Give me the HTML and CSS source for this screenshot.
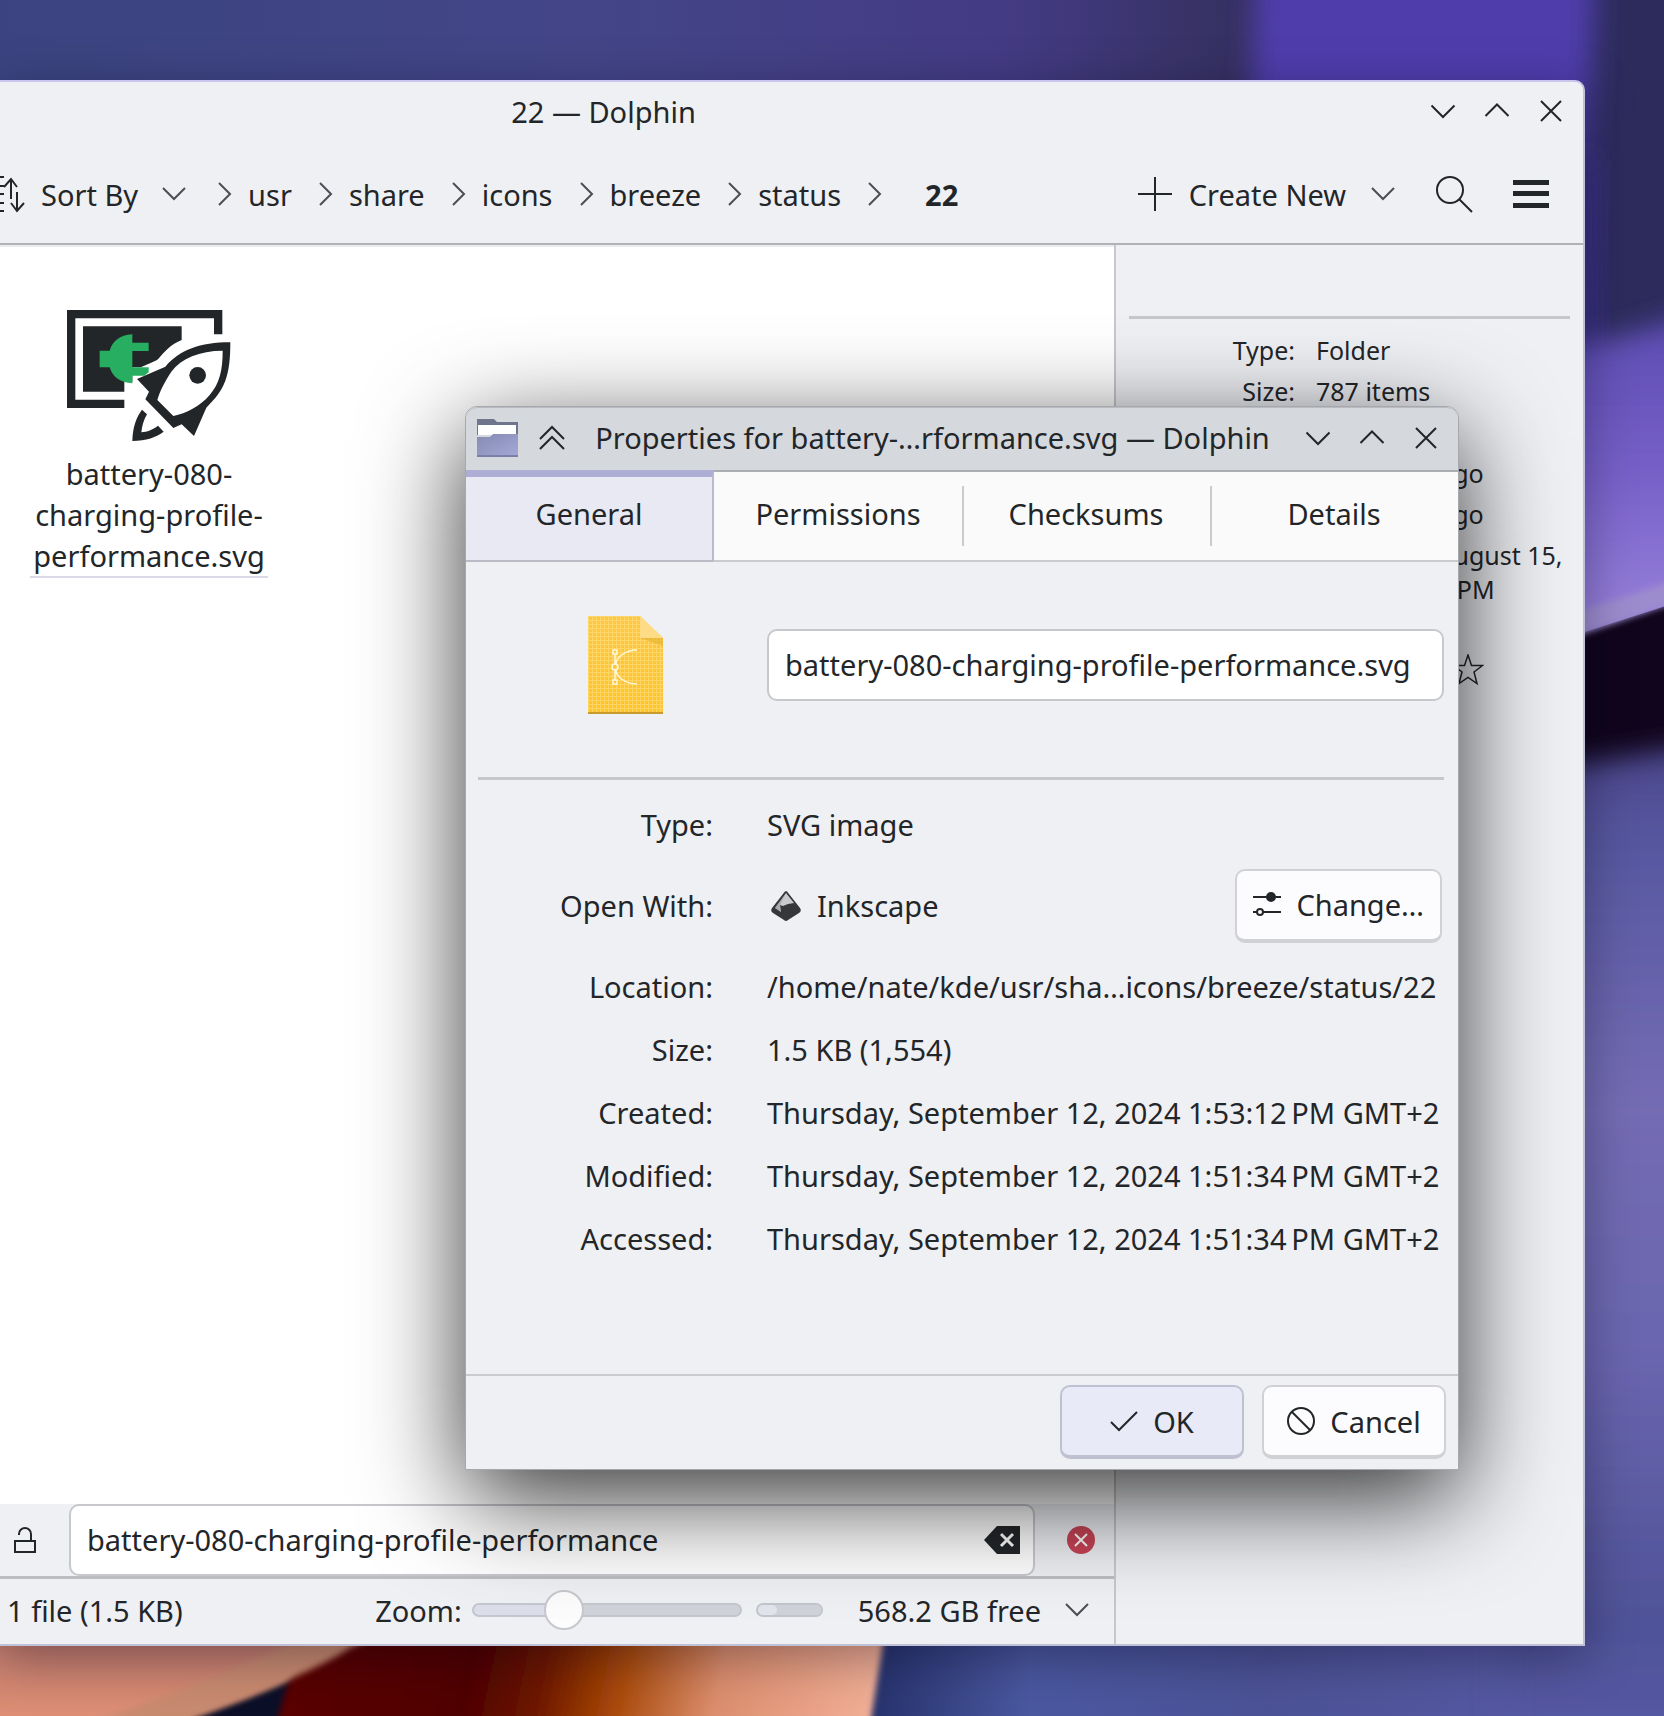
FILE: index.html
```html
<!DOCTYPE html>
<html lang="en">
<head>
<meta charset="utf-8">
<title>22 — Dolphin</title>
<link rel="stylesheet" href="styles.css">
</head>
<body class="desktop">
<svg class="wallpaper" viewBox="0 0 1664 1716" preserveAspectRatio="none" aria-hidden="true">
  <defs>
    <linearGradient id="sky" x1="0" x2="1" y1="0" y2="0">
      <stop offset="0" stop-color="#3b4480"/><stop offset=".35" stop-color="#434588"/><stop offset=".6" stop-color="#443b85"/><stop offset=".75" stop-color="#35305f"/><stop offset="1" stop-color="#2c2b5c"/>
    </linearGradient>
    <linearGradient id="petal" x1="0" x2="0" y1="0" y2="1">
      <stop offset="0" stop-color="#5a4ab0"/><stop offset=".5" stop-color="#7660c8"/><stop offset="1" stop-color="#9a84dc"/>
    </linearGradient>
    <linearGradient id="sea" x1="0" x2="0" y1="0" y2="1">
      <stop offset="0" stop-color="#4a4488"/><stop offset=".1" stop-color="#5657a0"/><stop offset=".35" stop-color="#746cb4"/><stop offset=".6" stop-color="#6965ae"/><stop offset=".85" stop-color="#4f5298"/><stop offset="1" stop-color="#585ca8"/>
    </linearGradient>
    <linearGradient id="ember" x1="300" x2="870" y1="1640" y2="1760" gradientUnits="userSpaceOnUse">
      <stop offset="0" stop-color="#5a0000"/><stop offset=".3" stop-color="#500000"/><stop offset=".42" stop-color="#6e1800"/><stop offset=".55" stop-color="#a84808"/><stop offset=".72" stop-color="#dc8e6e"/><stop offset="1" stop-color="#f2b098"/>
    </linearGradient>
    <linearGradient id="coral" x1="0" x2="0" y1="0" y2="1">
      <stop offset="0" stop-color="#b0706a"/><stop offset=".7" stop-color="#dd8e74"/>
    </linearGradient>
    <linearGradient id="bay" x1="0" x2="1" y1="0" y2="0">
      <stop offset="0" stop-color="#26326c"/><stop offset=".2" stop-color="#4a58a0"/><stop offset=".5" stop-color="#4c5296"/><stop offset="1" stop-color="#5a5ca8"/>
    </linearGradient>
    <filter id="soft" x="-20%" y="-20%" width="140%" height="140%"><feGaussianBlur stdDeviation="14"/></filter>
    <filter id="edge" x="-20%" y="-20%" width="140%" height="140%"><feGaussianBlur stdDeviation="3"/></filter>
  </defs>
  <rect width="1664" height="1716" fill="url(#sky)"/>
  <path d="M1256 -40H1596L1580 360H1240Z" fill="#503cac" filter="url(#soft)"/>
  <path d="M1540 160H1596L1600 380H1540Z" fill="#392e80" filter="url(#soft)"/>
  <path d="M1540 350Q1610 345 1720 305V640H1540Z" fill="url(#petal)" filter="url(#soft)"/>
  <path d="M1560 640L1700 595V920H1560Z" fill="#10051c"/>
  <path d="M1560 618L1700 572V594L1560 642Z" fill="#9c8cce" filter="url(#edge)"/>
  <path d="M880 1600H1664V1716H870Z" fill="url(#bay)"/>
  <path d="M1500 775Q1620 760 1740 738V1780H1500Z" fill="url(#sea)" filter="url(#soft)"/>
  <rect y="1600" width="400" height="116" fill="#0c0f28"/>
  <path d="M-40 1600H440L350 1648Q280 1690 190 1716V1760H-40Z" fill="url(#coral)" filter="url(#edge)"/>
  <path d="M310 1600H890L866 1750H268Q290 1680 310 1600Z" fill="url(#ember)" filter="url(#edge)"/>
  <path d="M0 1600H460L350 1648Q320 1668 240 1700L190 1720H100Q240 1670 320 1630Z" fill="#c88a70" filter="url(#edge)"/>
</svg>

<main class="window browser">
  <header class="titlebar">
    <h1 class="title">22 — Dolphin</h1>
    <div class="controls">
      <button class="control" aria-label="Minimize"><svg class="glyph" width="26" height="26" viewBox="0 0 26 26"><path d="M1.500 7.500 13 19 24.500 7.500"/></svg></button>
      <button class="control" aria-label="Maximize"><svg class="glyph" width="26" height="26" viewBox="0 0 26 26"><path d="M1.500 18 13 6.500 24.500 18"/></svg></button>
      <button class="control" aria-label="Close"><svg class="glyph" width="26" height="26" viewBox="0 0 26 26"><path d="M3 3 23 23M23 3 3 23"/></svg></button>
    </div>
  </header>
  <div class="toolbar">
    <button class="tool sort"><svg class="glyph" width="25" height="38" viewBox="0 0 25 38"><path d="M0 2H4M0 11H4M0 19H4M0 28H4M0 36H4M11 24V5M4 12 11 4 17 12M17 17V35M11 28 17 36 24 28"/></svg>Sort By<svg class="glyph thin" width="24" height="14" viewBox="0 0 24 14"><path d="M1 1 12 12 23 1"/></svg></button>
    <nav class="crumbs" aria-label="Location">
      <svg class="glyph thin" width="14" height="24" viewBox="0 0 14 24"><path d="M1 1 12 12 1 23"/></svg><a href="#">usr</a>
      <svg class="glyph thin" width="14" height="24" viewBox="0 0 14 24"><path d="M1 1 12 12 1 23"/></svg><a href="#">share</a>
      <svg class="glyph thin" width="14" height="24" viewBox="0 0 14 24"><path d="M1 1 12 12 1 23"/></svg><a href="#">icons</a>
      <svg class="glyph thin" width="14" height="24" viewBox="0 0 14 24"><path d="M1 1 12 12 1 23"/></svg><a href="#">breeze</a>
      <svg class="glyph thin" width="14" height="24" viewBox="0 0 14 24"><path d="M1 1 12 12 1 23"/></svg><a href="#">status</a>
      <svg class="glyph thin" width="14" height="24" viewBox="0 0 14 24"><path d="M1 1 12 12 1 23"/></svg><a class="current" href="#">22</a>
    </nav>
    <div class="actions">
      <button class="tool create"><svg class="glyph" width="34" height="34" viewBox="0 0 34 34"><path d="M17 0V34M0 17H34"/></svg>Create New<svg class="glyph thin" width="24" height="14" viewBox="0 0 24 14"><path d="M1 1 12 12 23 1"/></svg></button>
      <button class="tool" aria-label="Search"><svg class="glyph" width="38" height="38" viewBox="0 0 38 38"><circle cx="15" cy="15" r="13"/><path d="M24 24 37 37"/></svg></button>
      <button class="tool" aria-label="Menu"><svg width="36" height="30" viewBox="0 0 36 30" fill="#232629"><path d="M0 1H36V6H0ZM0 12H36V17H0ZM0 24H36V29H0Z"/></svg></button>
    </div>
  </div>
  <div class="content">
    <section class="folder">
      <div class="view">
        <figure class="file">
          <svg width="164" height="132" viewBox="202 90 492 396" aria-hidden="true">
            <path fill="#232629" d="M202 90H668V163H643V115H227V359H374V384H202Z"/>
            <path fill="#232629" d="M250 139H546V180C510 195 495 215 475 238C455 250 440 254 424 262H398V305H374V335H250Z"/>
            <path fill="#27ae60" d="M398 163V188H447V213H398V262H447V277L434 287H398V310C360 308 338 290 330 262H300V212H330C338 185 360 164 398 163Z"/>
            <path fill="#232629" fill-rule="evenodd" d="M692 187C600 187 540 210 497 260L412 297L448 335L437 358L521 444L546 433L583 468L620 383C675 330 692 290 692 187ZM669 212C600 212 545 235 515 275C495 305 480 335 473 360L521 408C560 400 600 380 630 345C660 310 669 270 669 212Z"/>
            <circle cx="594" cy="286" r="25" fill="#232629"/>
            <path fill="#232629" d="M427 389L442 403C432 420 427 437 425 457C443 455 458 450 475 437L492 455C470 472 440 482 398 483C399 440 410 412 427 389Z"/>
          </svg>
          <figcaption class="file-name">battery-080-<br>charging-profile-<br>performance.svg</figcaption>
        </figure>
      </div>
      <div class="filter">
        <button class="tool" aria-label="Keep filter"><svg class="glyph" width="24" height="28" viewBox="0 0 24 28"><path d="M2 15H22V26H2ZM6 9V8A6 6 0 0 1 18 8V15"/></svg></button>
        <div class="filter-field">
          <input class="field" type="text" aria-label="Filter" value="battery-080-charging-profile-performance">
          <button class="clear" aria-label="Clear"><svg width="36" height="28" viewBox="0 0 36 28"><path fill="#232629" d="M13 0H36V28H13L0 14Z"/><path d="M17 8 29 20M29 8 17 20" stroke="#fff" stroke-width="3"/></svg></button>
        </div>
        <button class="tool" aria-label="Close filter"><svg width="28" height="28" viewBox="0 0 28 28"><circle cx="14" cy="14" r="14" fill="#c94456"/><path d="M8 8 20 20M20 8 8 20" stroke="#fff" stroke-width="2"/></svg></button>
      </div>
      <footer class="status">
        <span class="summary">1 file (1.5 KB)</span>
        <label class="zoom">Zoom:<input class="slider" type="range" min="0" max="100" value="31"></label>
        <progress class="capacity" max="100" value="30" aria-label="Disk usage"></progress>
        <button class="tool space">568.2 GB free<svg class="glyph thin" width="24" height="14" viewBox="0 0 24 14"><path d="M1 1 12 12 23 1"/></svg></button>
      </footer>
    </section>
    <aside class="info">
      <hr class="rule">
      <dl class="facts">
        <dt>Type:</dt><dd>Folder</dd>
        <dt>Size:</dt><dd>787 items</dd>
        <dt>Items:</dt><dd>787</dd>
        <dt>Modified:</dt><dd>8 minutes ago</dd>
        <dt>Accessed:</dt><dd>8 minutes ago</dd>
        <dt>Created:</dt><dd>Thursday, August 15, 2024, 12:53 PM</dd>
        <dt>Tags:</dt><dd>Add</dd>
        <dt>Rating:</dt>
        <dd class="stars"><svg width="168" height="32" viewBox="0 0 168 32"><defs><path id="star" d="M16 1 19.500 11.500H30.500L22 18 25 29.500 16 23.500 7 29.500 10 18 1.500 11.500H12.500Z"/></defs><g fill="none" stroke="#232629" stroke-width="1.500"><use href="#star"/><use href="#star" x="34"/><use href="#star" x="68"/><use href="#star" x="102"/><use href="#star" x="136"/></g></svg></dd>
      </dl>
    </aside>
  </div>
</main>

<section class="window dialog" role="dialog" aria-labelledby="dialog-title">
  <header class="dialog-bar">
    <svg width="41" height="38" viewBox="0 0 41 38" aria-hidden="true">
      <defs><linearGradient id="front" x1="0" x2="1" y1="0" y2="1"><stop offset="0" stop-color="#858bb0"/><stop offset="1" stop-color="#a3a8d8"/></linearGradient></defs>
      <path fill="#70748c" d="M0 0H17L20 3H41V16H0Z"/><path fill="#fff" d="M1 6H39V16H1Z"/><path fill="url(#front)" d="M0 18H13L16 15H41V37H0Z"/><path fill="#7c80a8" d="M0 36H41V38H0Z"/>
    </svg>
    <button class="control shade" aria-label="Shade"><svg class="glyph" width="26" height="26" viewBox="0 0 26 26"><path d="M1 14 13 2 25 14M1 24 13 12 25 24"/></svg></button>
    <h2 class="title" id="dialog-title">Properties for battery-…rformance.svg — Dolphin</h2>
    <div class="controls">
      <button class="control" aria-label="Minimize"><svg class="glyph" width="26" height="26" viewBox="0 0 26 26"><path d="M1.500 7.500 13 19 24.500 7.500"/></svg></button>
      <button class="control" aria-label="Maximize"><svg class="glyph" width="26" height="26" viewBox="0 0 26 26"><path d="M1.500 18 13 6.500 24.500 18"/></svg></button>
      <button class="control" aria-label="Close"><svg class="glyph" width="26" height="26" viewBox="0 0 26 26"><path d="M3 3 23 23M23 3 3 23"/></svg></button>
    </div>
  </header>
  <div class="tabs" role="tablist">
    <button class="tab selected" role="tab" aria-selected="true">General</button>
    <button class="tab" role="tab">Permissions</button>
    <button class="tab" role="tab">Checksums</button>
    <button class="tab" role="tab">Details</button>
  </div>
  <form class="panel">
    <div class="name-row">
      <svg class="mime" width="75" height="98" viewBox="0 0 75 98" aria-hidden="true">
        <defs>
          <linearGradient id="paper" x1="0" x2="0" y1="0" y2="1"><stop offset="0" stop-color="#fdc743"/><stop offset="1" stop-color="#fdc526"/></linearGradient>
          <pattern id="grid" width="4" height="4" patternUnits="userSpaceOnUse"><path d="M0 .5H4M.5 0V4" stroke="#ffe08a" stroke-width="1"/></pattern>
        </defs>
        <path fill="url(#paper)" d="M0 0H52L75 22V98H0Z"/><path fill="url(#grid)" opacity=".6" d="M0 0H52L75 22V98H0Z"/>
        <path fill="#e3b02c" opacity=".6" d="M52 22H75V30Z"/><path fill="#fddc85" d="M52 0 75 22H52Z"/><path fill="#c99a2c" d="M0 96H75V98H0Z"/>
        <g fill="none" stroke="#fff8dc" stroke-width="1.500"><path d="M27 38V48M27 54V64M49 34C37 34 28 42 28 48M28 54C28 60 37 68 49 68"/><circle cx="27" cy="51" r="3"/><path d="M25 34H29V38H25ZM25 64H29V68H25Z"/></g>
      </svg>
      <input class="field" type="text" aria-label="Name" value="battery-080-charging-profile-performance.svg">
    </div>
    <hr class="rule">
    <dl class="properties">
      <dt>Type:</dt><dd>SVG image</dd>
      <dt>Open With:</dt>
      <dd class="opener">
        <svg width="30" height="30" viewBox="0 0 30 30" aria-hidden="true">
          <path fill="#35373b" d="M15 0Q16 0 18 3L29 17Q31 20 28 22L17 29Q15 31 13 29L2 22Q-1 20 1 17L12 3Q14 0 15 0Z"/>
          <path fill="#c9cacd" d="M15 2 23 12 17 13 12 15 9 14 10 21 4 17Z"/><path fill="#8b8d92" d="M15 2 9 14 10 21 4 17Z" opacity=".5"/>
        </svg>
        <span class="app">Inkscape</span>
        <button class="button" type="button"><svg class="glyph" width="28" height="26" viewBox="0 0 28 26"><path d="M0 5H28M0 20H4M10 20H28"/><circle cx="7" cy="20" r="3"/><circle cx="18" cy="5" r="4" fill="#232629"/></svg>Change…</button>
      </dd>
      <dt>Location:</dt><dd>/home/nate/kde/usr/sha…icons/breeze/status/22</dd>
      <dt>Size:</dt><dd>1.5 KB (1,554)</dd>
      <dt>Created:</dt><dd>Thursday, September 12, 2024 1:53:12&#8239;PM GMT+2</dd>
      <dt>Modified:</dt><dd>Thursday, September 12, 2024 1:51:34&#8239;PM GMT+2</dd>
      <dt>Accessed:</dt><dd>Thursday, September 12, 2024 1:51:34&#8239;PM GMT+2</dd>
    </dl>
  </form>
  <footer class="dialog-actions">
    <button class="button default"><svg class="glyph" width="28" height="26" viewBox="0 0 28 26"><path d="M1 14 9 22 27 4"/></svg>OK</button>
    <button class="button"><svg class="glyph" width="28" height="28" viewBox="0 0 28 28"><circle cx="14" cy="14" r="13"/><path d="M5 5 23 23"/></svg>Cancel</button>
  </footer>
</section>
</body>
</html>
```
FILE: styles.css
```css
* { box-sizing: border-box; }

.desktop {
  position: relative;
  margin: 0;
  min-height: 100vh;
  overflow: hidden;
  color: #232629;
  font: 29px/41px "Noto Sans", sans-serif;
}

.wallpaper {
  position: absolute;
  inset: 0;
  width: 100%;
  height: 100%;
}

button, input {
  font: inherit;
  color: inherit;
}

.window {
  position: absolute;
  background: #eff0f4;
}

.browser {
  inset: 80px 79px 70px 0;
  display: flex;
  flex-direction: column;
  border: 2px solid #bfc1d6;
  border-left: 0;
  border-top-color: #c8c6ee;
  border-radius: 0 10px 0 0;
  box-shadow: 0 12px 50px rgba(0, 0, 20, .35);
}

.title {
  margin: 0;
  font-size: 29px;
  font-weight: 400;
  text-align: center;
  white-space: nowrap;
}

.titlebar {
  display: grid;
  grid-template-columns: 1fr 376px;
  align-items: center;
  height: 58px;
}

.controls {
  display: flex;
  justify-content: flex-end;
  padding-right: 5px;
}

.control, .tool, .clear {
  display: flex;
  align-items: center;
  justify-content: center;
  padding: 0;
  border: 0;
  background: none;
}

.control { width: 54px; height: 54px; }

.glyph {
  flex: none;
  fill: none;
  stroke: #232629;
  stroke-width: 2;
}

.thin { stroke: #4b4e52; }

.toolbar {
  display: flex;
  align-items: center;
  height: 105px;
  padding: 5px 34px 0 0;
  border-bottom: 2px solid #b0b3b5;
}

.sort { gap: 16px; }
.sort .thin, .create .thin { margin-left: 8px; }

.crumbs {
  display: flex;
  align-items: center;
  margin-left: 32px;
}

.crumbs a {
  margin: 0 27px 0 16px;
  color: inherit;
  text-decoration: none;
}

.crumbs .current {
  margin: 0 0 0 43px;
  font-weight: 700;
}

.actions {
  display: flex;
  align-items: center;
  gap: 40px;
  margin-left: auto;
}

.create { gap: 17px; }

.content {
  display: flex;
  flex: 1;
  min-height: 0;
}

.folder {
  display: flex;
  flex: 1;
  flex-direction: column;
  min-width: 0;
}

.view {
  flex: 1;
  border-top: 2px solid #ebecee;
  padding: 63px 30px 0;
  background: #fff;
}

.file {
  display: flex;
  flex-direction: column;
  align-items: center;
  gap: 11px;
  width: 238px;
  margin: 0;
}

.file-name {
  width: 100%;
  border-bottom: 2px solid #d9d9e8;
  text-align: center;
}

.filter {
  display: flex;
  align-items: center;
  gap: 32px;
  padding: 0 19px 0 13px;
  border-bottom: 3px solid #bcbec1;
}

.filter-field {
  position: relative;
  flex: 1;
}

.field {
  display: block;
  width: 100%;
  height: 72px;
  padding: 0 16px 2px;
  border: 2px solid #c6c8cc;
  border-radius: 10px;
  background: #fff;
}

.clear {
  position: absolute;
  inset: 0 15px 0 auto;
}

.status {
  display: flex;
  align-items: center;
  height: 65px;
  padding: 0 25px 3px 7px;
}

.summary { flex: 1; }

.zoom {
  display: flex;
  align-items: center;
  gap: 10px;
}

.slider {
  width: 270px;
  height: 40px;
  margin: 0;
  background: none;
  appearance: none;
}

.slider::-webkit-slider-runnable-track {
  height: 14px;
  border: 2px solid #c5c7ce;
  border-radius: 7px;
  background: linear-gradient(90deg, #dcdeea 33%, #d0d2d9 33%);
}

.slider::-webkit-slider-thumb {
  width: 40px;
  height: 40px;
  margin-top: -15px;
  border: 2px solid #c6c8cd;
  border-radius: 50%;
  background: #fcfcfd;
  appearance: none;
}

.capacity {
  width: 67px;
  height: 14px;
  margin: 0 35px 0 14px;
  border: 2px solid #c3c5cc;
  border-radius: 7px;
  overflow: hidden;
  background: #d0d2da;
  appearance: none;
}

.capacity::-webkit-progress-bar { background: #d0d2da; }

.capacity::-webkit-progress-value {
  border-radius: 7px;
  background: #e2e4ec;
}

.space { gap: 24px; }

.info {
  width: 469px;
  padding: 71px 13px 0;
  border-left: 2px solid #c6c8cb;
}

.rule {
  height: 3px;
  margin: 0;
  border: 0;
  background: #c5c7ca;
}

.facts {
  display: grid;
  grid-template-columns: 166px 1fr;
  gap: 7px 21px;
  margin: 14px 0 0;
  font-size: 25px;
  line-height: 34px;
}

.facts dt, .properties dt { text-align: right; }
.facts dd, .properties dd { margin: 0; }
.stars svg { display: block; }

.dialog {
  top: 406px;
  left: 465px;
  width: 994px;
  border: 1px solid #a6a8ab;
  border-radius: 12px 12px 0 0;
  box-shadow: 0 28px 100px rgba(0, 0, 0, .8);
}

.dialog-bar {
  display: flex;
  align-items: center;
  height: 65px;
  padding: 0 0 3px 11px;
  border-top: 1px solid #b8bcc0;
  border-bottom: 2px solid #acaeb2;
  border-radius: 12px 12px 0 0;
  background: #d5d8dd;
}

.dialog-bar .title { flex: 1; }
.shade { width: 44px; margin-left: 12px; }

.tabs {
  display: grid;
  grid-template-columns: repeat(4, 1fr);
  height: 90px;
  border-bottom: 2px solid #c9cbcf;
  background: #fafafb;
}

.tab {
  position: relative;
  padding: 0 0 6px;
  border: 0;
  background: none;
}

.selected {
  margin: -2px 0;
  padding: 0 0 11px;
  border-top: 7px solid #adadd5;
  border-right: 2px solid #b9bbc6;
  border-bottom: 2px solid #b9bbc6;
  background: #e8e9f2;
}

.tab:nth-child(n+3)::before {
  position: absolute;
  inset: 14px auto 14px 0;
  width: 2px;
  background: #c8cacd;
  content: "";
}

.panel { padding: 0 14px 115px 12px; }

.name-row {
  display: grid;
  grid-template-columns: 235px minmax(0, 1fr);
  column-gap: 54px;
  align-items: center;
  padding: 54px 0 63px;
}

.mime {
  justify-self: end;
  margin-right: 50px;
}

.properties {
  display: grid;
  grid-template-columns: 235px minmax(0, 1fr);
  gap: 22px 54px;
  align-items: center;
  margin: 24px 0 0;
  white-space: nowrap;
}

.opener {
  display: flex;
  align-items: center;
  gap: 16px;
  height: 77px;
  padding: 0 2px 0 4px;
}

.app { flex: 1; }

.button {
  display: flex;
  align-items: center;
  justify-content: center;
  gap: 15px;
  height: 74px;
  padding: 0 16px;
  border: 2px solid #cfd1d5;
  border-bottom-width: 4px;
  border-radius: 10px;
  background: #fcfcfe;
}

.dialog-actions {
  display: flex;
  justify-content: flex-end;
  gap: 18px;
  padding: 9px 12px 10px;
  border-top: 2px solid #c9cbcf;
}

.dialog-actions .button { width: 184px; }

.default {
  border-color: #bfc1d2;
  background: #e8eaf7;
}
```
